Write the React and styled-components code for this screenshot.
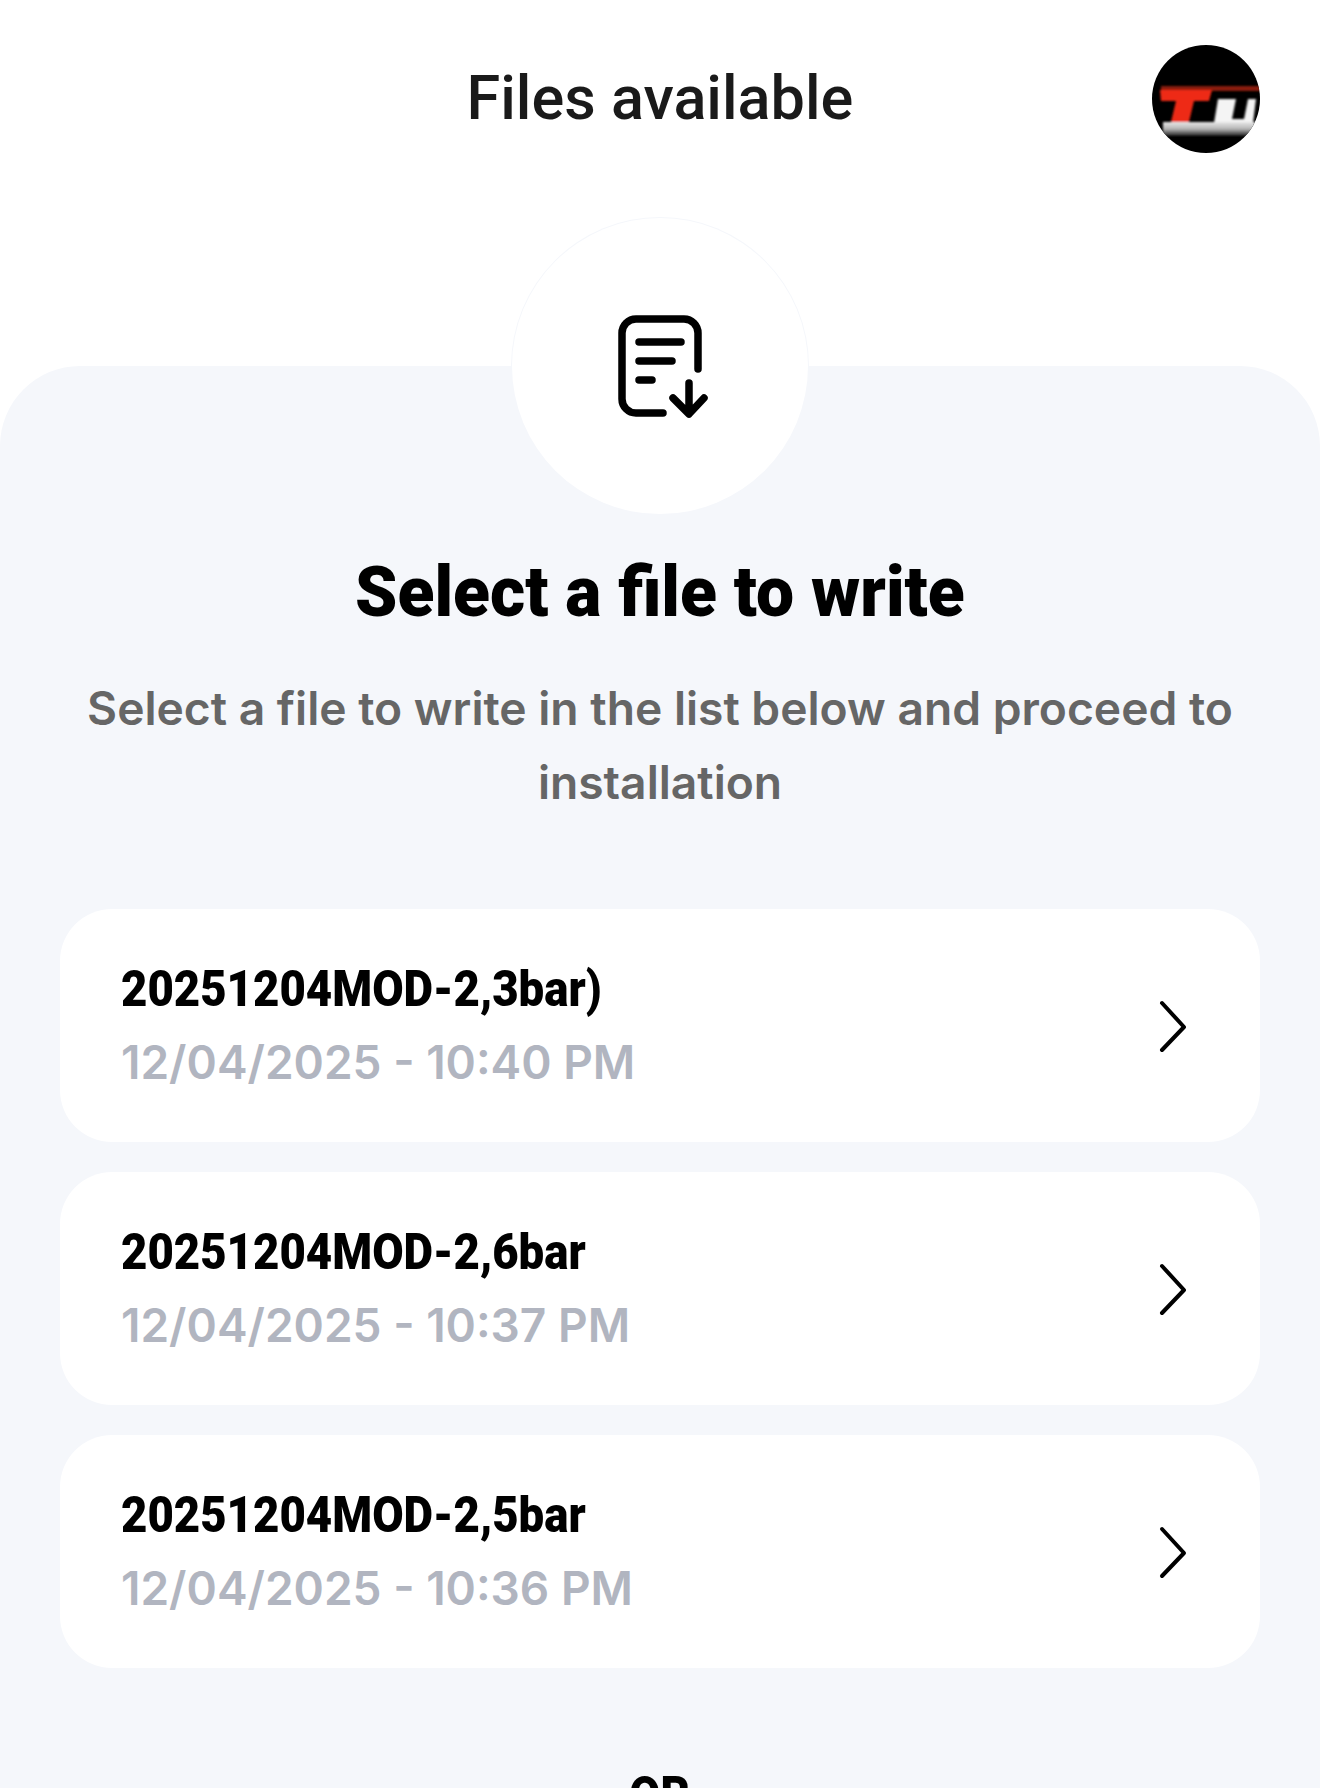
import React from 'react'
import styled, { createGlobalStyle } from 'styled-components'

const files = [
  { name: '20251204MOD-2,3bar)', date: '12/04/2025 - 10:40 PM' },
  { name: '20251204MOD-2,6bar', date: '12/04/2025 - 10:37 PM' },
  { name: '20251204MOD-2,5bar', date: '12/04/2025 - 10:36 PM' },
]

const Avatar = () => (
  <AvatarSvg viewBox='0 0 108 108'>
    <defs>
      <filter id='soft' x='-10%' y='-10%' width='120%' height='120%'>
        <feGaussianBlur stdDeviation='1.3' />
      </filter>
      <linearGradient id='stripe' x1='0' y1='0' x2='0' y2='1'>
        <stop offset='0' stopColor='#e8e8e8' />
        <stop offset='0.5' stopColor='#b4b4b4' />
        <stop offset='1' stopColor='#1c1c1c' />
      </linearGradient>
      <clipPath id='disc'>
        <circle cx='54' cy='54' r='54' />
      </clipPath>
    </defs>
    <g clipPath='url(#disc)'>
      <rect width='108' height='108' fill='#000' />
      <g filter='url(#soft)'>
        <rect x='9' y='41' width='99' height='5' fill='#8a1a0c' />
        <polygon points='8,45 60,45 57,56 42,56 36,81 18,81 24,56 9,56' fill='#ee2b17' />
        <polygon points='66,54 84,54 80,74 92,74 96,54 104,54 101,78 62,78' fill='#f4f4f4' />
        <rect x='11' y='77' width='92' height='14' fill='url(#stripe)' />
      </g>
    </g>
  </AvatarSvg>
)

const FileIcon = () => (
  <svg width='100' height='115' viewBox='0 0 100 115' fill='none' stroke='#000' strokeWidth='7.5' strokeLinecap='round' strokeLinejoin='round'>
    <path d='M53 104H26a14 14 0 0 1-14-14V24a14 14 0 0 1 14-14h48a14 14 0 0 1 14 14v36' />
    <path d='M29 33h42M29 52h33M29 71h13' />
    <path d='M79 74v30M63 89l16 16 15-16' />
  </svg>
)

const Chevron = () => (
  <ChevronSvg viewBox='0 0 30 56'>
    <path d='M4 4l22 24L4 51' />
  </ChevronSvg>
)

const App = () => (
  <Page>
    <GlobalStyle />
    <Header>
      <HeaderTitle>Files available</HeaderTitle>
      <Avatar />
    </Header>
    <Panel>
      <IconCircle>
        <FileIcon />
      </IconCircle>
      <Heading>Select a file to write</Heading>
      <Subtitle>Select a file to write in the list below and proceed to installation</Subtitle>
      <List>
        {files.map((f) => (
          <Card key={f.date}>
            <div>
              <FileName>{f.name}</FileName>
              <FileDate>{f.date}</FileDate>
            </div>
            <Chevron />
          </Card>
        ))}
      </List>
      <Or>OR</Or>
    </Panel>
  </Page>
)

const GlobalStyle = createGlobalStyle`
  html, body {
    margin: 0;
    padding: 0;
    background: #fff;
  }
`

const Page = styled.div`
  width: 1320px;
  height: 1788px;
  overflow: hidden;
  background: #fff;
  font-family: Inter, "Liberation Sans", sans-serif;
`

const Header = styled.header`
  position: relative;
  display: flex;
  justify-content: center;
  align-items: center;
  height: 194px;
`

const HeaderTitle = styled.h1`
  margin: 0;
  font-family: Roboto, sans-serif;
  font-size: 62px;
  font-weight: 500;
  color: #1a1a1a;
  transform: scaleX(0.987);
`

const AvatarSvg = styled.svg`
  position: absolute;
  left: 1152px;
  top: 45px;
  width: 108px;
  height: 108px;
`

const Panel = styled.main`
  display: flex;
  flex-direction: column;
  align-items: center;
  margin-top: 172px;
  height: 1422px;
  padding: 0 60px;
  background: #f5f7fb;
  border-radius: 80px 80px 0 0;
`

const IconCircle = styled.div`
  display: flex;
  align-items: center;
  justify-content: center;
  width: 296px;
  height: 296px;
  margin-top: -148px;
  flex-shrink: 0;
  border-radius: 50%;
  background: #fff;
  box-shadow: 0 0 0 1px #f5f7fb;
`

const Heading = styled.h2`
  margin: 38px 0 0;
  font-family: Roboto, sans-serif;
  font-size: 70px;
  line-height: 80px;
  font-weight: 900;
  color: #000;
  white-space: nowrap;
  transform: scaleX(0.968);
`

const Subtitle = styled.p`
  margin: 39px 0 0;
  text-align: center;
  font-size: 46.2px;
  line-height: 74px;
  font-weight: 600;
  color: #666;
`

const List = styled.div`
  display: flex;
  flex-direction: column;
  gap: 30px;
  width: 100%;
  margin-top: 90px;
`

const Card = styled.div`
  display: flex;
  align-items: center;
  justify-content: space-between;
  height: 233px;
  padding: 0 72px 0 61px;
  background: #fff;
  border-radius: 52px;
`

const ChevronSvg = styled.svg`
  width: 30px;
  height: 56px;
  margin-top: 2px;
  fill: none;
  stroke: #000;
  stroke-width: 4;
  stroke-linecap: round;
  stroke-linejoin: round;
`

const FileName = styled.div`
  font-family: Roboto, sans-serif;
  font-size: 50px;
  line-height: 64px;
  font-weight: 900;
  color: #000;
  transform: scaleX(0.911);
  transform-origin: left center;
`

const FileDate = styled.div`
  margin-top: 9px;
  font-size: 46px;
  line-height: 64px;
  font-weight: 600;
  color: #b1b5c0;
`

const Or = styled.div`
  margin-top: 97px;
  font-family: Roboto, sans-serif;
  font-size: 50px;
  line-height: 60px;
  font-weight: 900;
  color: #000;
  transform: scaleX(0.9);
`

export default App
